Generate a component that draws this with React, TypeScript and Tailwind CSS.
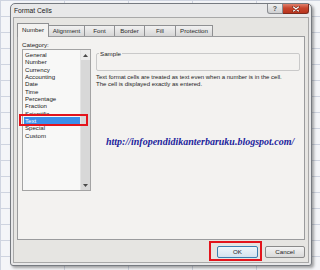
import React from "react";

const items = [
  "General",
  "Number",
  "Currency",
  "Accounting",
  "Date",
  "Time",
  "Percentage",
  "Fraction",
  "Scientific",
  "Text",
  "Special",
  "Custom",
];

const tabs = [
  { label: "Number", w: "w-[32px]", active: true },
  { label: "Alignment", w: "w-[36px]", active: false },
  { label: "Font", w: "w-[30px]", active: false },
  { label: "Border", w: "w-[30px]", active: false },
  { label: "Fill", w: "w-[31px]", active: false },
  { label: "Protection", w: "w-[37px]", active: false },
];

export default function App() {
  return (
    <div className="w-[320px] h-[270px] overflow-hidden bg-[#f4f5f8] bg-[linear-gradient(#cfd4e0_1px,transparent_1px),linear-gradient(90deg,#cfd4e0_1px,transparent_1px)] bg-[size:64px_16px] pl-[10px] pt-[3px] font-['Liberation_Sans',Arial,sans-serif] text-[#1b1b1b]">
      <div className="relative w-[302px] h-[263px] rounded-t-[5px] rounded-b-[3px] border border-[#767a80] bg-[#e8e8e9] shadow-[2px_2px_3px_rgba(0,0,0,0.35)] flex flex-col">
        {/* title bar */}
        <div className="h-[13px] flex items-start shrink-0">
          <span className="pl-[3px] pt-[3px] text-[6.7px] leading-[7px] text-[#202020]">
            Format Cells
          </span>
          <div className="ml-auto mr-[2px] flex">
            <div className="w-[16px] h-[10px] flex items-center justify-center rounded-bl-[3px] border border-t-0 border-[#8b8d92] bg-[linear-gradient(#f0f0f0,#cfd0d2)] text-[7px] leading-none font-bold text-[#555]">
              ?
            </div>
            <div className="w-[26px] h-[10px] flex items-center justify-center rounded-br-[3px] border border-t-0 border-l-0 border-[#7c2a1e] bg-[linear-gradient(#e0806c,#c7452d_45%,#b8341d)]">
              <svg width="8" height="6" viewBox="0 0 8 6">
                <path d="M1.5 1 L6.5 5 M6.5 1 L1.5 5" stroke="#5a1a10" strokeWidth="2.2" strokeLinecap="round" />
                <path d="M1.5 1 L6.5 5 M6.5 1 L1.5 5" stroke="#ffffff" strokeWidth="1.2" strokeLinecap="round" />
              </svg>
            </div>
          </div>
        </div>

        {/* client area */}
        <div className="mx-[2px] mb-[2px] flex-1 border border-[#a8a8a8] bg-[#e6e5e2] flex flex-col pt-[5px] px-[3px]">
          {/* tabs */}
          <div className="flex items-end h-[13px]">
            {tabs.map((t) =>
              t.active ? (
                <div
                  key={t.label}
                  className={`${t.w} h-[14px] -mb-px relative z-10 flex items-center justify-center border border-b-0 border-[#8f9092] bg-[#f3f2f0] text-[6.2px] leading-none`}
                >
                  {t.label}
                </div>
              ) : (
                <div
                  key={t.label}
                  className={`${t.w} h-[11px] flex items-center justify-center border border-b-0 border-l-0 border-[#8f9092] bg-[linear-gradient(#f1f1f1,#d6d6d6)] text-[6.2px] leading-none text-[#2a2a2a]`}
                >
                  {t.label}
                </div>
              )
            )}
          </div>

          {/* panel */}
          <div className="h-[204px] border border-[#9a9b9d] bg-[#f3f2f0] flex pl-[4px] pt-[4px] pr-[4px]">
            {/* left column */}
            <div className="flex flex-col">
              <div className="h-[8px] text-[6.2px] leading-[8px]">Category:</div>
              <div className="w-[69px] h-[142px] border border-[#a3a3a3] bg-[#f8f8f7] flex">
                <div className="flex-1 pt-[1px] pl-px">
                  {items.map((it) =>
                    it === "Text" ? (
                      <div
                        key={it}
                        className="relative h-[7.33px] bg-[#3b8eea] text-white text-[6.1px] leading-[7.33px] pl-[1px]"
                      >
                        {it}
                        <div className="absolute z-10 -left-[5px] -right-[8px] -top-[3px] -bottom-[2px] border-2 border-[#e3141c]" />
                      </div>
                    ) : (
                      <div key={it} className="h-[7.33px] text-[6.1px] leading-[7.33px] pl-[1px]">
                        {it}
                      </div>
                    )
                  )}
                </div>
                <div className="w-[10px] flex flex-col bg-[#d8d8d8] border-l border-[#e4e4e4]">
                  <div className="h-[10px] bg-[#ececec] flex items-center justify-center">
                    <svg width="5" height="3" viewBox="0 0 5 3">
                      <path d="M2.5 0 L5 3 L0 3 Z" fill="#4a4a4a" />
                    </svg>
                  </div>
                  <div className="flex-1" />
                  <div className="h-[10px] flex items-center justify-center">
                    <svg width="5" height="3" viewBox="0 0 5 3">
                      <path d="M0 0 L5 0 L2.5 3 Z" fill="#4a4a4a" />
                    </svg>
                  </div>
                </div>
              </div>
            </div>

            {/* right column */}
            <div className="ml-[5px] flex-1 flex flex-col pt-[12px]">
              <div className="relative h-[18px] border border-[#c9c9c9] rounded-[2px]">
                <span className="absolute -top-[4px] left-[2px] bg-[#f3f2f0] px-[1px] text-[6.2px] leading-[7px]">
                  Sample
                </span>
              </div>
              <div className="mt-[3px] text-[6px] leading-[7.2px] text-[#1e1e1e]">
                <div>Text format cells are treated as text even when a number is in the cell.</div>
                <div>The cell is displayed exactly as entered.</div>
              </div>
              <div className="mt-[48px] ml-[10px] font-['Liberation_Serif',serif] font-bold italic text-[10px] leading-[11px] text-[#22249c] whitespace-nowrap">
                http://infopendidikanterbaruku.blogspot.com/
              </div>
            </div>
          </div>

          {/* buttons */}
          <div className="mt-[6px] flex justify-end gap-[7px]">
            <div className="relative w-[41px] h-[12px] rounded-[2px] border border-[#3d7fb0] bg-[linear-gradient(#eef6fb,#d4e3ee)] flex items-center justify-center text-[6.2px] leading-none">
              OK
              <div className="absolute -left-[9px] -right-[5px] -top-[6px] -bottom-[4px] border-2 border-[#e3141c]" />
            </div>
            <div className="w-[40px] h-[12px] rounded-[2px] border border-[#8a8a8a] bg-[linear-gradient(#f3f3f3,#d9d9d9)] flex items-center justify-center text-[6.2px] leading-none">
              Cancel
            </div>
          </div>
        </div>
      </div>
    </div>
  );
}
